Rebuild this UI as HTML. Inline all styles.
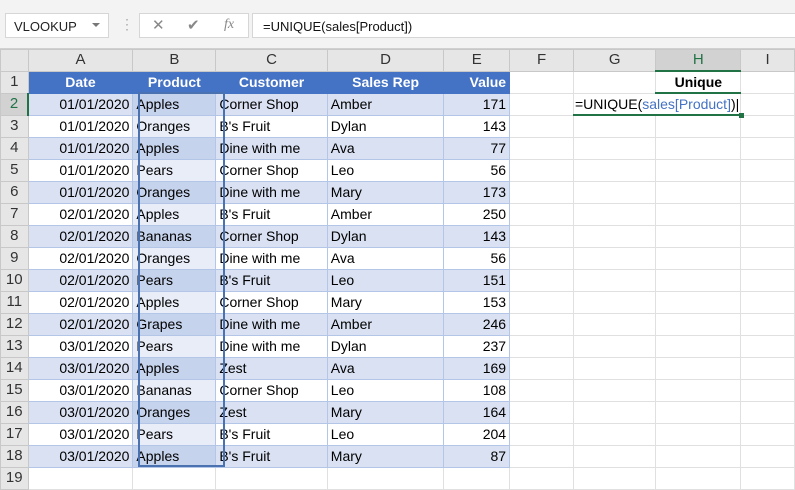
<!DOCTYPE html>
<html><head><style>
*{margin:0;padding:0;box-sizing:border-box}
body{width:795px;height:490px;overflow:hidden;background:#fff;font-family:"Liberation Sans",sans-serif;position:relative}
.top{position:absolute;left:0;top:0;width:795px;height:49px;background:#f3f3f3;border-bottom:1px solid #d0d0d0}
.nb{position:absolute;left:5px;top:13px;width:104px;height:25px;background:#fff;border:1px solid #d6d6d6;font-size:13px;padding:5px 0 0 8px;color:#222}
.nb span{position:absolute;right:8px;top:9px;width:0;height:0;border-left:4px solid transparent;border-right:4px solid transparent;border-top:4px solid #777}
.fx{position:absolute;left:139px;top:13px;width:110px;height:25px;background:#fff;border:1px solid #d6d6d6;color:#888;font-size:15px}
.fb{position:absolute;left:252px;top:13px;width:545px;height:25px;background:#fff;border:1px solid #d6d6d6;font-size:13px;padding:5px 0 0 10px;color:#111}
table{position:absolute;left:0;top:49px;border-collapse:collapse;table-layout:fixed;font-size:14px}
td{height:22px;border:1px solid #e0e0e0;white-space:nowrap;overflow:hidden;padding:0 3px;line-height:20px}
tr.h td{height:21px;background:#e6e6e6;color:#333;text-align:center;font-size:15px;border-color:#c8c8c8}
td.r{background:#e6e6e6;color:#333;text-align:center;padding:0;font-size:15px;border-color:#c8c8c8}
.th{background:#4472c4!important;color:#fff;font-weight:bold;text-align:center;border-color:#4472c4!important}
.b{background:#d9e1f2;border-color:#b4c6e7}
.w{background:#fff;border-color:#b4c6e7}
.bs{background:#c6d3ec;border-color:#b4c6e7}
.ws{background:#e8edf8;border-color:#b4c6e7}
.n{text-align:right}
</style></head><body>
<div class="top">
<div class="nb">VLOOKUP<span></span></div>
<div style="position:absolute;left:120px;top:16px;color:#aaa;font-size:14px">⋮</div>
<div class="fx"><span style="position:absolute;left:12px;top:2px">✕</span><span style="position:absolute;left:47px;top:2px">✔</span><span style="position:absolute;left:84px;top:3px;font-family:'Liberation Serif',serif;font-style:italic;font-size:14px">fx</span></div>
<div class="fb">=UNIQUE(sales[Product])</div>
</div>
<table>
<colgroup><col style="width:29px"><col style="width:109px"><col style="width:86px"><col style="width:115px"><col style="width:123px"><col style="width:69px"><col style="width:71px"><col style="width:69px"><col style="width:71px"><col style="width:60px"></colgroup>
<tr class="h"><td></td><td>A</td><td>B</td><td>C</td><td>D</td><td>E</td><td>F</td><td>G</td><td style="background:#d2d2d2;color:#217346;border-bottom:2px solid #217346">H</td><td>I</td></tr>
<tr><td class="r">1</td><td class="th">Date</td><td class="th">Product</td><td class="th">Customer</td><td class="th">Sales Rep</td><td class="th" style="text-align:right">Value</td><td></td><td></td><td style="font-weight:bold;text-align:center;border-bottom:2px solid #217346">Unique</td><td></td></tr>
<tr><td class="r" style="color:#217346;background:#d2d2d2;border-right:2px solid #217346">2</td><td class="b n">01/01/2020</td><td class="bs">Apples</td><td class="b">Corner Shop</td><td class="b">Amber</td><td class="b n">171</td><td></td><td colspan="2" style="border-bottom:2px solid #217346;overflow:visible;padding:0 1px">=UNIQUE(<span style="color:#4472c4">sales[Product]</span>)|</td><td></td></tr>
<tr><td class="r">3</td><td class="w n">01/01/2020</td><td class="ws">Oranges</td><td class="w">B's Fruit</td><td class="w">Dylan</td><td class="w n">143</td><td></td><td></td><td></td><td></td></tr>
<tr><td class="r">4</td><td class="b n">01/01/2020</td><td class="bs">Apples</td><td class="b">Dine with me</td><td class="b">Ava</td><td class="b n">77</td><td></td><td></td><td></td><td></td></tr>
<tr><td class="r">5</td><td class="w n">01/01/2020</td><td class="ws">Pears</td><td class="w">Corner Shop</td><td class="w">Leo</td><td class="w n">56</td><td></td><td></td><td></td><td></td></tr>
<tr><td class="r">6</td><td class="b n">01/01/2020</td><td class="bs">Oranges</td><td class="b">Dine with me</td><td class="b">Mary</td><td class="b n">173</td><td></td><td></td><td></td><td></td></tr>
<tr><td class="r">7</td><td class="w n">02/01/2020</td><td class="ws">Apples</td><td class="w">B's Fruit</td><td class="w">Amber</td><td class="w n">250</td><td></td><td></td><td></td><td></td></tr>
<tr><td class="r">8</td><td class="b n">02/01/2020</td><td class="bs">Bananas</td><td class="b">Corner Shop</td><td class="b">Dylan</td><td class="b n">143</td><td></td><td></td><td></td><td></td></tr>
<tr><td class="r">9</td><td class="w n">02/01/2020</td><td class="ws">Oranges</td><td class="w">Dine with me</td><td class="w">Ava</td><td class="w n">56</td><td></td><td></td><td></td><td></td></tr>
<tr><td class="r">10</td><td class="b n">02/01/2020</td><td class="bs">Pears</td><td class="b">B's Fruit</td><td class="b">Leo</td><td class="b n">151</td><td></td><td></td><td></td><td></td></tr>
<tr><td class="r">11</td><td class="w n">02/01/2020</td><td class="ws">Apples</td><td class="w">Corner Shop</td><td class="w">Mary</td><td class="w n">153</td><td></td><td></td><td></td><td></td></tr>
<tr><td class="r">12</td><td class="b n">02/01/2020</td><td class="bs">Grapes</td><td class="b">Dine with me</td><td class="b">Amber</td><td class="b n">246</td><td></td><td></td><td></td><td></td></tr>
<tr><td class="r">13</td><td class="w n">03/01/2020</td><td class="ws">Pears</td><td class="w">Dine with me</td><td class="w">Dylan</td><td class="w n">237</td><td></td><td></td><td></td><td></td></tr>
<tr><td class="r">14</td><td class="b n">03/01/2020</td><td class="bs">Apples</td><td class="b">Zest</td><td class="b">Ava</td><td class="b n">169</td><td></td><td></td><td></td><td></td></tr>
<tr><td class="r">15</td><td class="w n">03/01/2020</td><td class="ws">Bananas</td><td class="w">Corner Shop</td><td class="w">Leo</td><td class="w n">108</td><td></td><td></td><td></td><td></td></tr>
<tr><td class="r">16</td><td class="b n">03/01/2020</td><td class="bs">Oranges</td><td class="b">Zest</td><td class="b">Mary</td><td class="b n">164</td><td></td><td></td><td></td><td></td></tr>
<tr><td class="r">17</td><td class="w n">03/01/2020</td><td class="ws">Pears</td><td class="w">B's Fruit</td><td class="w">Leo</td><td class="w n">204</td><td></td><td></td><td></td><td></td></tr>
<tr><td class="r">18</td><td class="b n">03/01/2020</td><td class="bs">Apples</td><td class="b">B's Fruit</td><td class="b">Mary</td><td class="b n">87</td><td></td><td></td><td></td><td></td></tr>
<tr><td class="r">19</td><td></td><td></td><td></td><td></td><td></td><td></td><td></td><td></td><td></td></tr>
</table>
<div style="position:absolute;left:138px;top:92px;width:87px;height:375px;border:2px solid #4a72b0"></div>
<div style="position:absolute;left:739px;top:113px;width:5px;height:5px;background:#217346"></div>
</body></html>
